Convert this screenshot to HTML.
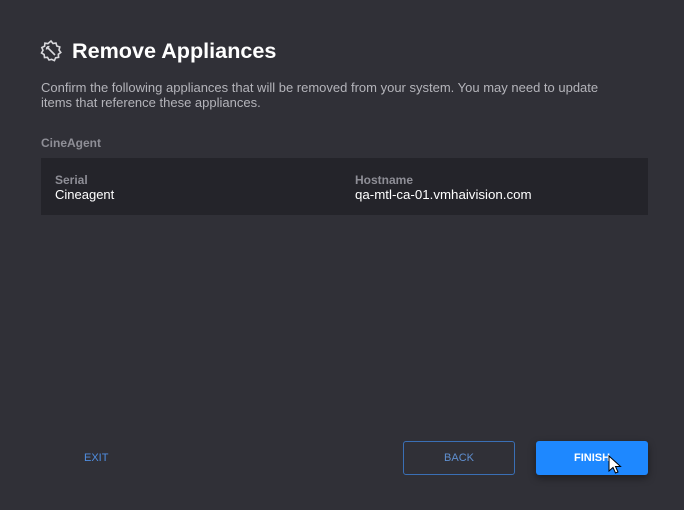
<!DOCTYPE html>
<html><head><style>
body{margin:0;width:684px;height:510px;background:#303037;font-family:"Liberation Sans",sans-serif;position:relative;overflow:hidden}
.a{position:absolute}
</style></head><body>
<svg class="a" style="left:39px;top:39px" width="24" height="24" viewBox="0 0 24 24" fill="none" stroke="#d8d8dc" stroke-width="1.6"><path d="M12 2l2 2.5 3-.5.8 3 3 1-.8 3 1.8 2.5-2.5 1.8.3 3-3 .5-1.2 2.8-2.8-1.2L10 21l-1.5-2.7-3 .2-.4-3L2.5 14 4 11.3 2.8 8.5l2.8-1.3.3-3 3 .4z"/><path d="M8 8l8 8M8 8l2.5-.5M8 8l-.5 2.5"/></svg>
<div class="a" style="left:72px;top:38px;font-size:21.6px;font-weight:bold;color:#fff">Remove Appliances</div>
<div class="a" style="left:41px;top:80px;width:588px;font-size:13px;line-height:15px;color:#b4b4ba">Confirm the following appliances that will be removed from your system. You may need to update items that reference these appliances.</div>
<div class="a" style="left:41px;top:136px;font-size:12px;font-weight:bold;color:#8e8e96">CineAgent</div>
<div class="a" style="left:41px;top:158px;width:607px;height:57px;background:#24242a"></div>
<div class="a" style="left:55px;top:173px;font-size:12px;font-weight:bold;color:#8e8e96">Serial</div>
<div class="a" style="left:55px;top:187px;font-size:13px;color:#fff">Cineagent</div>
<div class="a" style="left:355px;top:173px;font-size:12px;font-weight:bold;color:#8e8e96">Hostname</div>
<div class="a" style="left:355px;top:187px;font-size:13.3px;color:#fff">qa-mtl-ca-01.vmhaivision.com</div>
<div class="a" style="left:84px;top:452px;font-size:11px;color:#4f8de0">EXIT</div>
<div class="a" style="left:403px;top:441px;width:110px;height:32px;border:1px solid #3a6fb5;border-radius:3px;color:#5f8fd0;font-size:11px;text-align:center;line-height:32px">BACK</div>
<div class="a" style="left:536px;top:441px;width:112px;height:34px;background:#1e88ff;border-radius:3px;color:#fff;font-size:11px;font-weight:bold;text-align:center;line-height:34px;box-shadow:0 3px 8px rgba(0,0,0,.4)">FINISH</div>
<svg class="a" style="left:608px;top:455px" width="14" height="20" viewBox="0 0 14 20"><path d="M1 1v15l4-3.5 2.5 5.5 2.5-1-2.5-5.5h5z" fill="#fff" stroke="#000" stroke-width="1"/></svg>
</body></html>
